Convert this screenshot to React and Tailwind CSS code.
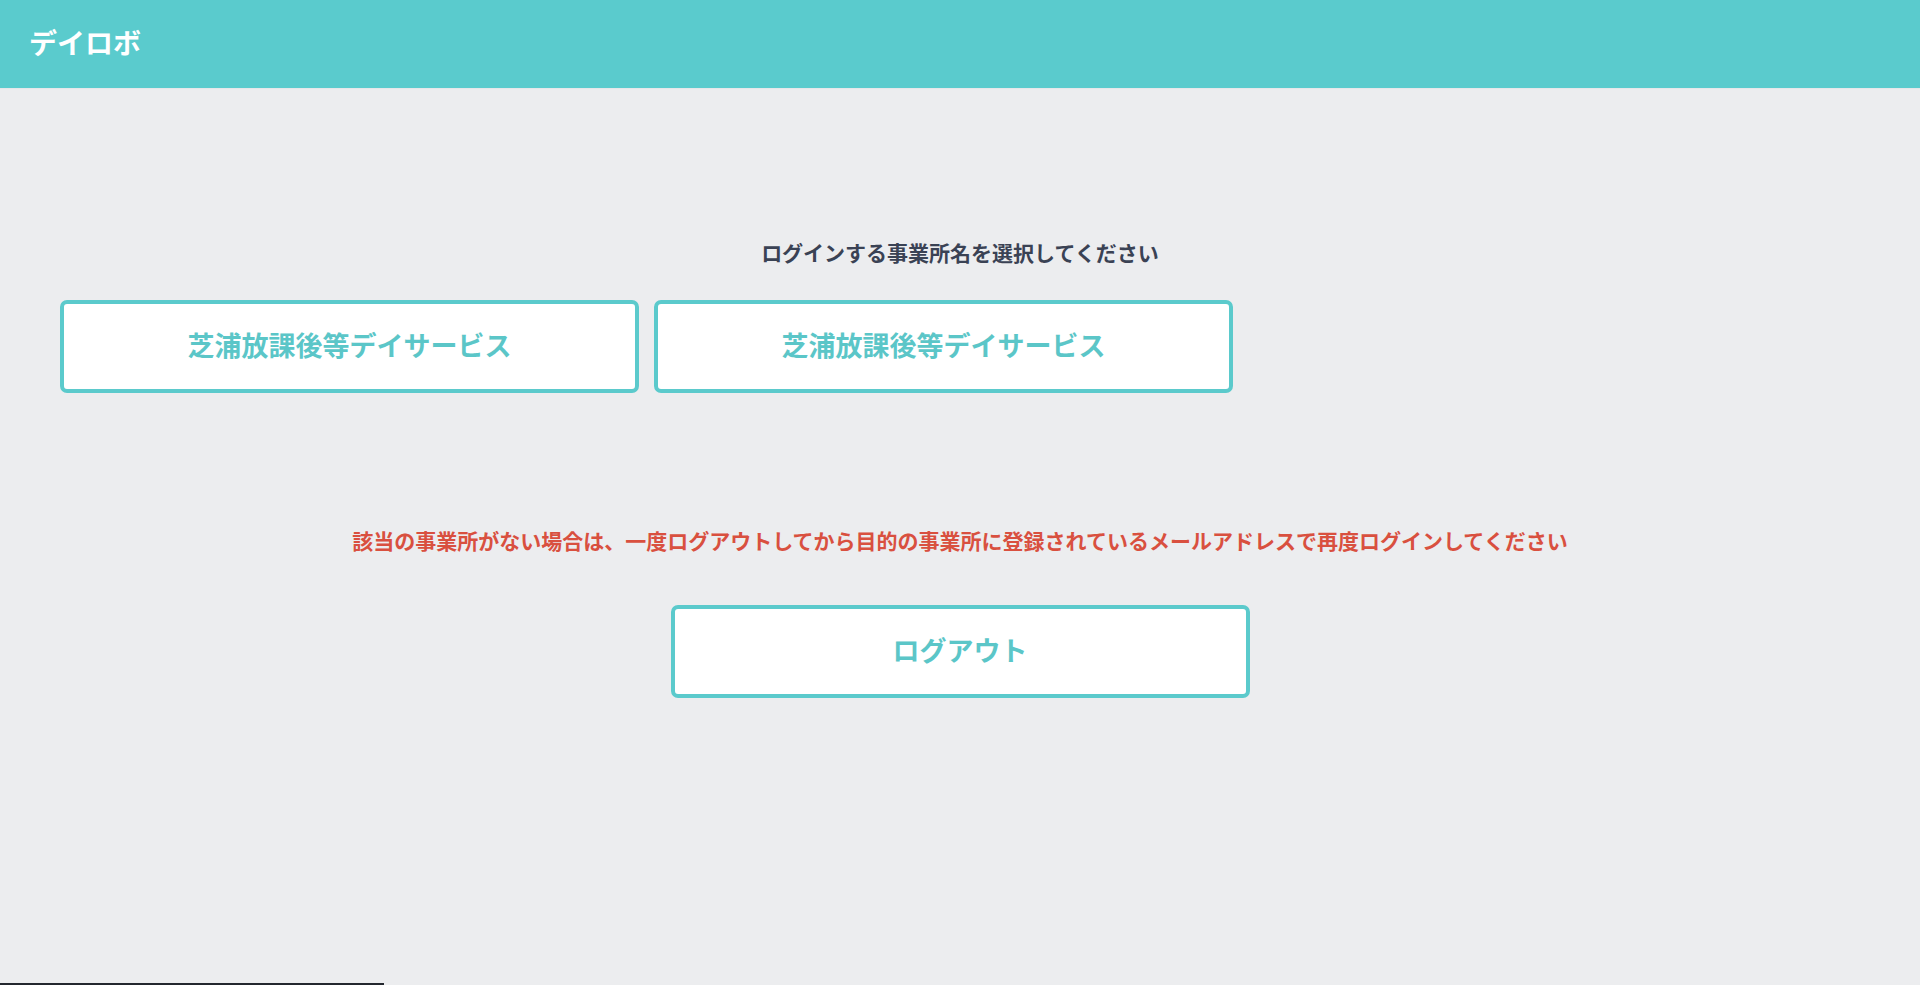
import React from "react";

const font = { fontFamily: '"Noto Sans CJK JP", "Noto Sans", sans-serif' };

function OfficeButton({ label }) {
  return (
    <button className="w-[579px] h-[93px] bg-white border-4 border-[#5bcacc] rounded-[7px] flex items-center justify-center pb-[4px] text-[27px] font-bold text-[#5bc6c8] leading-none">
      {label}
    </button>
  );
}

export default function App() {
  return (
    <div style={font} className="w-full min-h-[985px] bg-[#ecedef] flex flex-col relative overflow-hidden">
      <header className="h-[89px] bg-[#5acbcd] flex items-center pl-[29px] pb-[4px] border-b border-[#e6e7ea]">
        <span className="text-white text-[28px] font-bold leading-none">デイロボ</span>
      </header>
      <main className="flex flex-col">
        <p className="mt-[148px] h-[30px] leading-[30px] text-center text-[21px] font-bold text-[#3a4254]">
          ログインする事業所名を選択してください
        </p>
        <div className="mt-[33px] flex gap-[15px] pl-[60px]">
          <OfficeButton label="芝浦放課後等デイサービス" />
          <OfficeButton label="芝浦放課後等デイサービス" />
        </div>
        <p className="mt-[132px] h-[30px] leading-[30px] text-center text-[21px] font-bold text-[#d9503f]">
          該当の事業所がない場合は、一度ログアウトしてから目的の事業所に登録されているメールアドレスで再度ログインしてください
        </p>
        <div className="mt-[50px] flex justify-center">
          <OfficeButton label="ログアウト" />
        </div>
      </main>
      <div className="absolute left-0 bottom-0 w-[384px] h-[2px] bg-[#23272e]" />
    </div>
  );
}
